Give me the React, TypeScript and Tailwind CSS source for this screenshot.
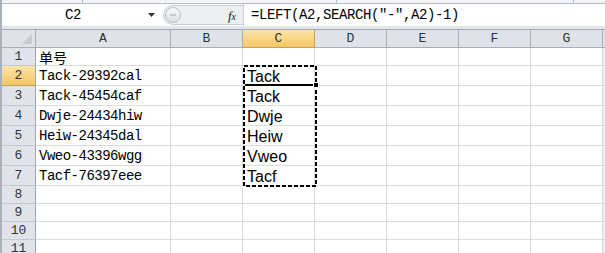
import React from 'react';

const cols = ['A', 'B', 'C', 'D', 'E', 'F', 'G'];
const colW = ['w-[135px]', 'w-[72px]', 'w-[72px]', 'w-[72px]', 'w-[72px]', 'w-[72px]', 'w-[72px]'];

const rows: { n: number; h: string; a?: string; c?: string; cn?: boolean }[] = [
    { n: 1, h: 'h-[18px]', a: '单号', cn: true },
    { n: 2, h: 'h-[20px]', a: 'Tack-29392cal', c: 'Tack' },
    { n: 3, h: 'h-[20px]', a: 'Tack-45454caf', c: 'Tack' },
    { n: 4, h: 'h-[20px]', a: 'Dwje-24434hiw', c: 'Dwje' },
    { n: 5, h: 'h-[20px]', a: 'Heiw-24345dal', c: 'Heiw' },
    { n: 6, h: 'h-[20px]', a: 'Vweo-43396wgg', c: 'Vweo' },
    { n: 7, h: 'h-[20px]', a: 'Tacf-76397eee', c: 'Tacf' },
    { n: 8, h: 'h-[18px]' },
    { n: 9, h: 'h-[18px]' },
    { n: 10, h: 'h-[18px]' },
    { n: 11, h: 'h-[18px]' },
];

const mono = "font-['Liberation_Mono','DejaVu_Sans_Mono',monospace]";

const App: React.FC = () => {
    return (
        <div className={`w-[605px] h-[253px] overflow-hidden bg-white border-l-2 border-[#aab2bc] ${mono}`}>
            {/* ribbon edge */}
            <div className="h-[4px] flex bg-[#f3f5f8] border-b border-[#b4bbc5]">
                <div className="w-[81px] border-r border-[#bcc3cc]" />
                <div className="w-[254px] border-r border-[#bcc3cc]" />
                <div className="w-[237px] border-r border-[#bcc3cc]" />
            </div>

            {/* formula bar */}
            <div className="h-[22px] flex bg-white">
                <div className="w-[161px] flex items-center relative">
                    <span className="w-[142px] text-center text-[14px] tracking-[-0.4px] text-black leading-none">C2</span>
                    <svg className="absolute left-[146px] top-[9px]" width="7" height="4" viewBox="0 0 7 4">
                        <path d="M0 0h7L3.5 4z" fill="#333" />
                    </svg>
                </div>
                <div className="w-[80px] my-[1px] flex items-center rounded-l-full bg-[#eceef1] border border-[#c9ced5] border-r-0 relative">
                    <div className="w-[16px] h-[16px] ml-[1px] rounded-full bg-linear-to-b from-[#fbfbfc] to-[#d9dde2] border border-[#b9bfc7] flex items-center justify-center">
                        <div className="w-[6px] h-[2px] bg-[#c4c9cf]" />
                    </div>
                    <span className="ml-auto mr-[7px] font-['Liberation_Serif',serif] italic text-[13px] text-[#222] leading-none">
                        f<span className="text-[10px]">x</span>
                    </span>
                </div>
                <div className="flex-1 flex items-center pl-[7px] border-l border-[#c9ced5] text-[14px] tracking-[-0.4px] text-black leading-none whitespace-nowrap">
                    =LEFT(A2,SEARCH("-",A2)-1)
                </div>
            </div>
            <div className="h-[4px] bg-[#e3e7ec] border-b border-[#a3abb5]" />

            {/* grid */}
            <div className="relative">
                <div className="flex h-[18px]">
                    <div className="w-[34px] bg-[#dfe3e8] border-r border-b border-[#a7aeb7] relative">
                        <svg className="absolute right-[3px] bottom-[3px]" width="10" height="10" viewBox="0 0 10 10">
                            <path d="M10 0v10H0z" fill="#c6cbd1" />
                        </svg>
                    </div>
                    {cols.map((c, i) => (
                        <div
                            key={c}
                            className={`${colW[i]} flex items-end justify-center pb-[1px] border-r border-b text-[13px] leading-none h-full ${
                                c === 'C'
                                    ? 'bg-linear-to-b from-[#fce4a8] to-[#f5c763] border-[#c2a25c] text-[#333]'
                                    : 'bg-[#dfe3e8] border-[#a7aeb7] text-[#333]'
                            }`}
                        >
                            <span className="mb-[1px]">{c}</span>
                        </div>
                    ))}
                    <div className="flex-1 bg-[#dfe3e8] border-b border-[#a7aeb7]" />
                </div>

                {rows.map((r) => (
                    <div key={r.n} className={`flex ${r.h}`}>
                        <div
                            className={`w-[34px] flex items-center justify-center border-r border-r-[#9ea6b0] border-b text-[13px] leading-none text-[#333] ${
                                r.n === 2
                                    ? 'bg-linear-to-b from-[#fce4a8] to-[#f5c763] border-b-[#c2a25c]'
                                    : 'bg-[#e0e4ea] border-b-[#c5cad1]'
                            }`}
                        >
                            {r.n}
                        </div>
                        {cols.map((c, i) => (
                            <div key={c} className={`${colW[i]} border-r border-b border-[#dadcdd] flex items-end overflow-hidden`}>
                                {c === 'A' && r.a && (
                                    <span
                                        className={
                                            r.cn
                                                ? "pl-[3px] text-[14px] leading-[16px] text-black font-['Noto_Sans_CJK_SC',sans-serif]"
                                                : 'pl-[3px] pb-[2px] text-[14px] tracking-[-0.5px] leading-none text-black whitespace-nowrap'
                                        }
                                    >
                                        {r.a}
                                    </span>
                                )}
                                {c === 'C' && r.c && (
                                    <span className="pl-[4px] text-[16px] leading-[17px] text-black font-['Liberation_Sans',Arial,sans-serif]">
                                        {r.c}
                                    </span>
                                )}
                            </div>
                        ))}
                        <div className="flex-1 border-b border-[#dadcdd] bg-[#e9ebee]" />
                    </div>
                ))}

                {/* copy marquee */}
                <svg className="absolute left-[241px] top-[35px]" width="74" height="122" viewBox="0 0 74 122">
                    <rect x="1" y="1" width="72" height="120" fill="none" stroke="#000" strokeWidth="2" strokeDasharray="4 2" />
                </svg>
                {/* active cell bottom + fill handle */}
                <div className="absolute left-[243px] top-[54px] w-[70px] h-[2px] bg-black" />
                <div className="absolute left-[311px] top-[52px] w-[6px] h-[6px] bg-black border border-white" />
            </div>
        </div>
    );
};

export default App;
